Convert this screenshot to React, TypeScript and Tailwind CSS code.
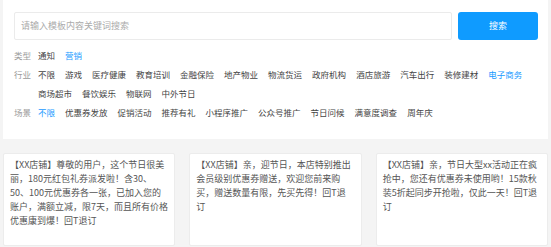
import React from 'react'

const industries = [
  '不限', '游戏', '医疗健康', '教育培训', '金融保险', '地产物业', '物流货运', '政府机构',
  '酒店旅游', '汽车出行', '装修建材', '电子商务', '商场超市', '餐饮娱乐', '物联网', '中外节日',
]

const scenes = [
  '不限', '优惠券发放', '促销活动', '推荐有礼', '小程序推广', '公众号推广', '节日问候', '满意度调查', '周年庆',
]

const templates = [
  '【XX店铺】尊敬的用户，这个节日很美丽，180元红包礼券派发啦！含30、50、100元优惠券各一张，已加入您的账户，满额立减，限7天，而且所有价格优惠康到爆！回T退订',
  '【XX店铺】亲，迎节日，本店特别推出会员级别优惠券赠送，欢迎您前来购买，赠送数量有限，先买先得！回T退订',
  '【XX店铺】亲，节日大型xx活动正在疯抢中，您还有优惠券未使用哟！15款秋装5折起同步开抢啦，仅此一天！回T退订',
]

interface IFilterRow {
  label: string
  items: string[]
  active: string
}

const FilterRow: React.FC<IFilterRow> = ({ label, items, active }) => (
  <div className="flex leading-[19px]">
    <span className="w-[24px] shrink-0 text-[#9a9a9a]">{label}</span>
    <div className="flex flex-wrap gap-x-[10px]">
      {items.map((item) => (
        <span key={item} className={item === active ? 'text-[#1a9bff]' : 'text-[#444]'}>
          {item}
        </span>
      ))}
    </div>
  </div>
)

export default function App() {
  return (
    <div className="h-[247px] w-[551px] overflow-hidden bg-[#f4f4f4] px-[3px] text-[9px] font-['Noto_Sans_CJK_SC','Noto_Sans',sans-serif]">
      <div className="bg-white pl-[11px] pr-[10px] pt-[12px] pb-[17px]">
        <div className="flex gap-[6px]">
          <div className="flex h-[28px] flex-1 items-center rounded-[2px] border border-[#ebebeb] px-[6px] text-[#ababab]">
            请输入模板内容关键词搜索
          </div>
          <button className="h-[28px] w-[80px] rounded-[3px] bg-[#0f9bff] text-white">搜索</button>
        </div>

        <div className="mt-[6px] text-[8.5px]">
          <FilterRow label="类型" items={['通知', '营销']} active="营销" />
          <FilterRow label="行业" items={industries} active="电子商务" />
          <FilterRow label="场景" items={scenes} active="不限" />
        </div>
      </div>

      <div className="mt-[14px] grid grid-cols-3 gap-[14px]">
        {templates.map((text, i) => (
          <div
            key={i}
            className="h-[93px] rounded-[2px] border border-[#ececec] bg-white px-[6px] pt-[4px] leading-[14px] text-[#555]"
          >
            {text}
          </div>
        ))}
      </div>
    </div>
  )
}
